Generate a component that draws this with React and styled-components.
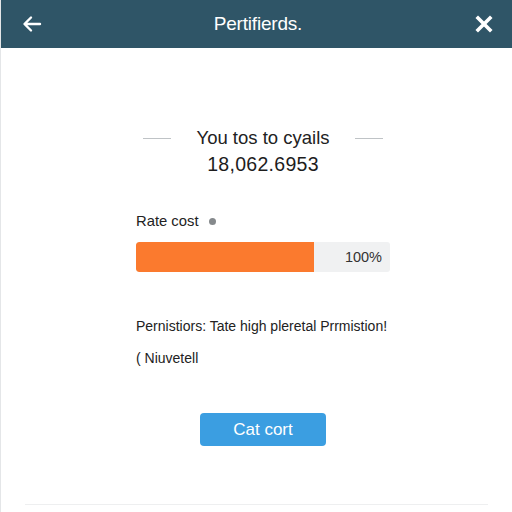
import React from "react";
import styled, { createGlobalStyle } from "styled-components";

const Global = createGlobalStyle`
  html, body {
    margin: 0;
    padding: 0;
    background: #ffffff;
  }
  body {
    font-family: "Liberation Sans", Arial, sans-serif;
    color: #222;
  }
`;

const Page = styled.div`
  width: 512px;
  height: 512px;
  display: flex;
  flex-direction: column;
  border-left: 1px solid #e4e6e8;
  box-sizing: border-box;
  overflow: hidden;
`;

const Header = styled.header`
  height: 48px;
  background: #2f5567;
  display: flex;
  align-items: center;
  justify-content: space-between;
  padding: 0 17px 0 20px;
  color: #fff;
`;

const IconButton = styled.span`
  width: 22px;
  height: 22px;
  display: flex;
  align-items: center;
  justify-content: center;
`;

const Title = styled.h1`
  margin: 0;
  font-size: 19px;
  font-weight: 400;
  letter-spacing: -0.2px;
`;

const Body = styled.main`
  flex: 1;
  display: flex;
  flex-direction: column;
  align-items: center;
  padding: 79px 0 0 13px;
`;

const Column = styled.div`
  width: 254px;
  display: flex;
  flex-direction: column;
`;

const Heading = styled.div`
  display: flex;
  align-items: center;
  justify-content: center;
  gap: 25px;
  font-size: 18.5px;
  color: #222;
`;

const Rule = styled.span`
  width: 28px;
  height: 1px;
  background: #bfc3c6;
`;

const Amount = styled.div`
  text-align: center;
  font-size: 19.5px;
  color: #1d1d1d;
  margin-top: 4px;
  letter-spacing: 0.3px;
`;

const Label = styled.div`
  margin-top: 37px;
  display: flex;
  align-items: center;
  gap: 10px;
  font-size: 14.8px;
  color: #222;
`;

const Dot = styled.span`
  width: 7px;
  height: 7px;
  border-radius: 50%;
  background: #85898c;
`;

const Track = styled.div`
  margin-top: 13px;
  height: 30px;
  background: #f0f1f2;
  border-radius: 3px;
  display: flex;
  align-items: center;
  justify-content: space-between;
  overflow: hidden;
`;

const Fill = styled.div`
  height: 100%;
  background: #fb7a2e;
  border-radius: 3px 0 0 3px;
`;

const Percent = styled.span`
  font-size: 14.5px;
  color: #333;
  padding-right: 8px;
`;

const Text = styled.p`
  margin: ${(p) => p.$top}px 0 0 0;
  font-size: 14px;
  color: #222;
  white-space: nowrap;
`;

const Button = styled.button`
  margin-top: 47px;
  width: 126px;
  height: 33px;
  border: none;
  border-radius: 4px;
  background: #3b9ee1;
  color: #fff;
  font-family: "Liberation Sans", Arial, sans-serif;
  font-size: 17px;
`;

const Footer = styled.div`
  margin: 0 24px 7px;
  height: 1px;
  background: #eeeff0;
`;

export default function App() {
  return (
    <>
      <Global />
      <Page>
        <Header>
          <IconButton>
            <svg width="20" height="18" viewBox="0 0 20 18" fill="none" stroke="#fff" strokeWidth="2.4" strokeLinecap="round" strokeLinejoin="round">
              <path d="M18 9H3M9 2.5L2.5 9 9 15.5" />
            </svg>
          </IconButton>
          <Title>Pertifierds.</Title>
          <IconButton>
            <svg width="18" height="18" viewBox="0 0 18 18" fill="none" stroke="#fff" strokeWidth="3.6" strokeLinecap="square">
              <path d="M3 3L15 15M15 3L3 15" />
            </svg>
          </IconButton>
        </Header>
        <Body>
          <Column>
            <Heading>
              <Rule />
              <span>You tos to cyails</span>
              <Rule />
            </Heading>
            <Amount>18,062.6953</Amount>
            <Label>
              Rate cost <Dot />
            </Label>
            <Track>
              <Fill style={{ width: `${(178 / 254) * 100}%` }} />
              <Percent>100%</Percent>
            </Track>
            <Text $top={46}>Pernistiors: Tate high pleretal Prrmistion!</Text>
            <Text $top={16}>( Niuvetell</Text>
          </Column>
          <Button>Cat cort</Button>
        </Body>
        <Footer />
      </Page>
    </>
  );
}
